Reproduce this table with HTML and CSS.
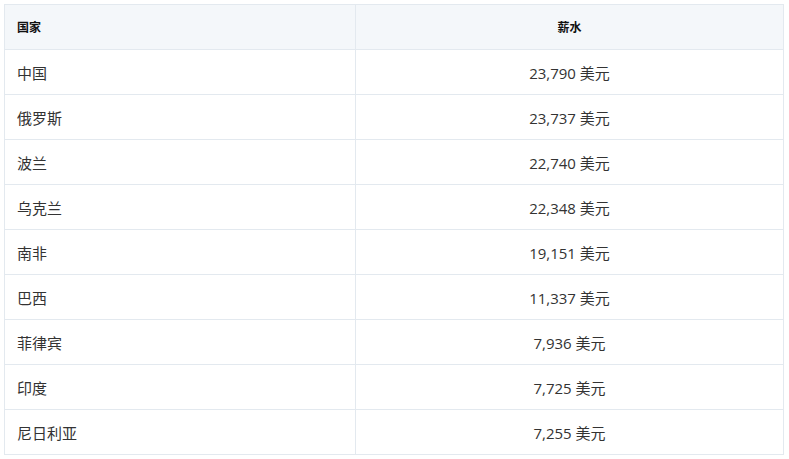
FILE: index.html
```html
<!DOCTYPE html>
<html lang="zh">
<head>
    <meta charset="UTF-8">
    <title>薪水</title>
    <link rel="stylesheet" href="styles.css">
</head>
<body>

<table class="salary-table">
    <thead>
        <tr>
            <th class="col-country">国家</th>
            <th class="col-salary">薪水</th>
        </tr>
    </thead>
    <tbody>
        <tr><td>中国</td><td class="num">23,790 美元</td></tr>
        <tr><td>俄罗斯</td><td class="num">23,737 美元</td></tr>
        <tr><td>波兰</td><td class="num">22,740 美元</td></tr>
        <tr><td>乌克兰</td><td class="num">22,348 美元</td></tr>
        <tr><td>南非</td><td class="num">19,151 美元</td></tr>
        <tr><td>巴西</td><td class="num">11,337 美元</td></tr>
        <tr><td>菲律宾</td><td class="num">7,936 美元</td></tr>
        <tr><td>印度</td><td class="num">7,725 美元</td></tr>
        <tr><td>尼日利亚</td><td class="num">7,255 美元</td></tr>
    </tbody>
</table>

</body>
</html>
```
FILE: styles.css
```css
body {
    margin: 4px;
    background: #fff;
    font-family: "Open Sans", "Noto Sans CJK SC", sans-serif;
    color: #333;
}
.salary-table {
    width: 780px;
    border-collapse: collapse;
    border: 1px solid #e3e9ef;
    table-layout: fixed;
}
.salary-table th,
.salary-table td {
    border: 1px solid #e3e9ef;
    height: 45px;
    padding: 0 12px;
    box-sizing: border-box;
}
.salary-table th {
    background-color: #f4f7fa;
    font-size: 12px;
    font-weight: bold;
    color: #111;
    text-align: left;
}
.salary-table th.col-country {
    width: 351px;
}
.salary-table th.col-salary {
    text-align: center;
}
.salary-table td {
    font-size: 15px;
    color: #333;
}
.salary-table td.num {
    text-align: center;
}
```
